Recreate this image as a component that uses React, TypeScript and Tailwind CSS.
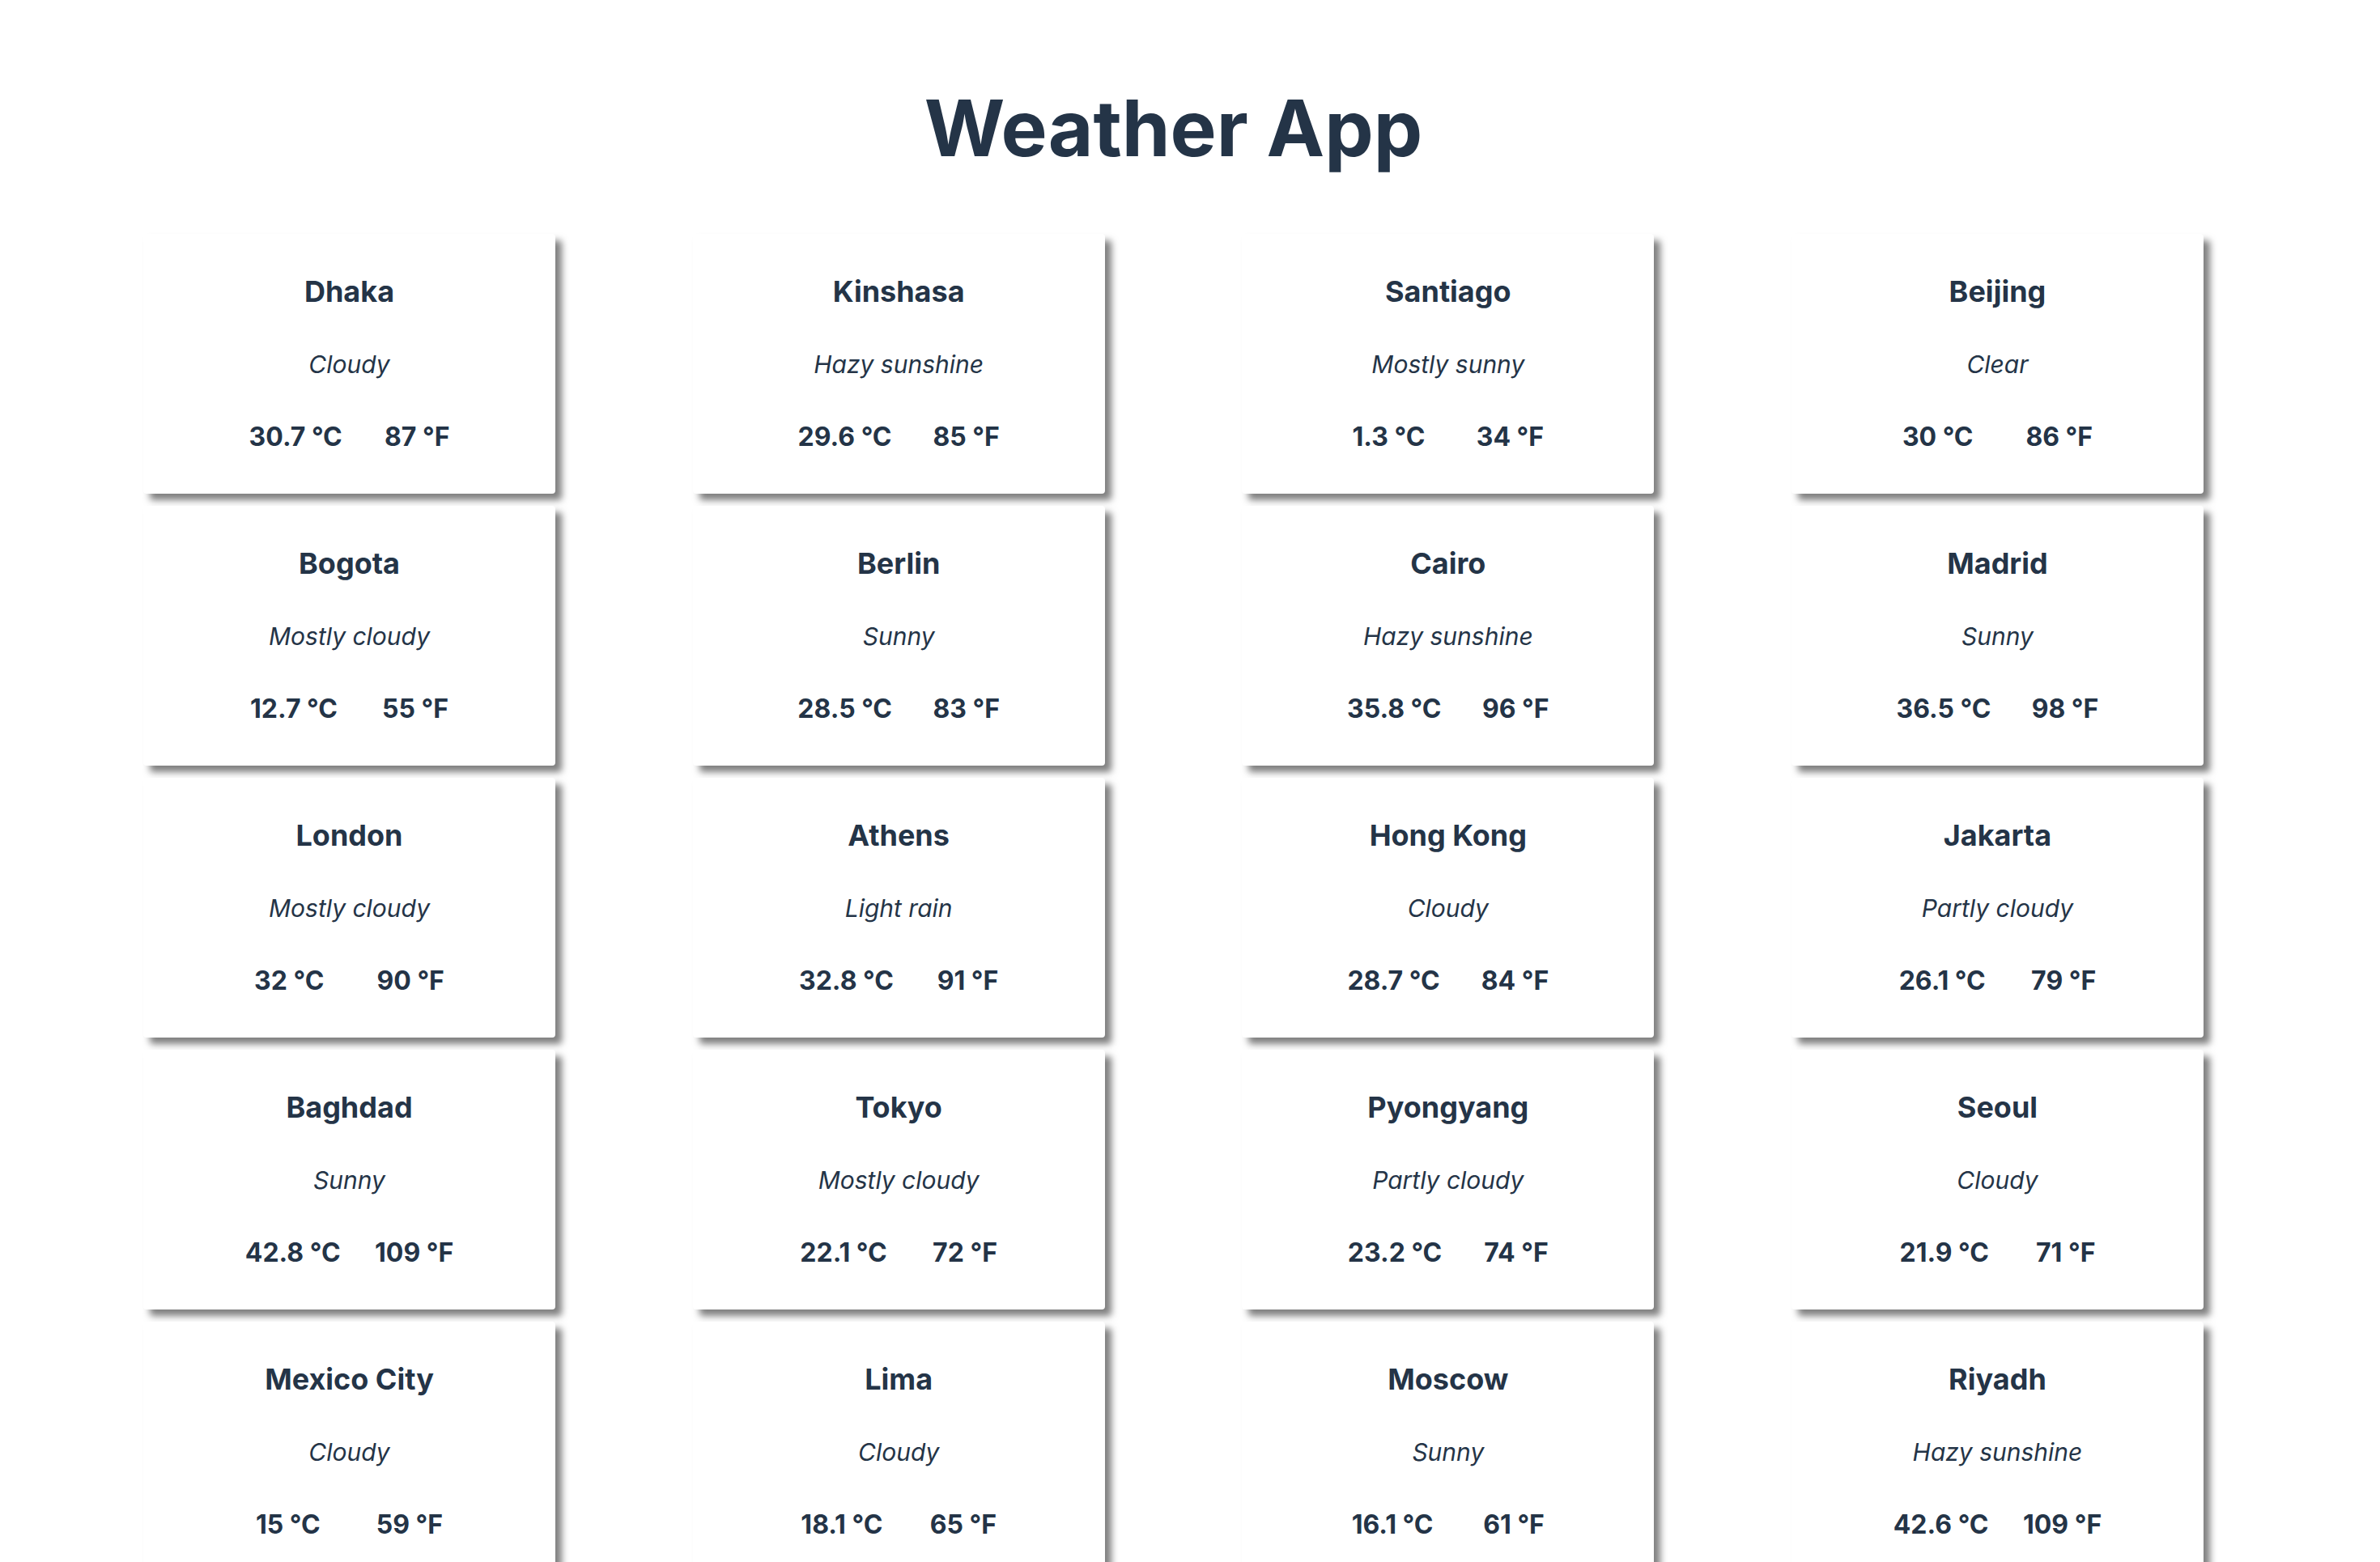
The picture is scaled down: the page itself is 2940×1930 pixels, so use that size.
const cities = [
  { name: 'Dhaka', text: 'Cloudy', c: '30.7', f: '87' },
  { name: 'Kinshasa', text: 'Hazy sunshine', c: '29.6', f: '85' },
  { name: 'Santiago', text: 'Mostly sunny', c: '1.3', f: '34' },
  { name: 'Beijing', text: 'Clear', c: '30', f: '86' },
  { name: 'Bogota', text: 'Mostly cloudy', c: '12.7', f: '55' },
  { name: 'Berlin', text: 'Sunny', c: '28.5', f: '83' },
  { name: 'Cairo', text: 'Hazy sunshine', c: '35.8', f: '96' },
  { name: 'Madrid', text: 'Sunny', c: '36.5', f: '98' },
  { name: 'London', text: 'Mostly cloudy', c: '32', f: '90' },
  { name: 'Athens', text: 'Light rain', c: '32.8', f: '91' },
  { name: 'Hong Kong', text: 'Cloudy', c: '28.7', f: '84' },
  { name: 'Jakarta', text: 'Partly cloudy', c: '26.1', f: '79' },
  { name: 'Baghdad', text: 'Sunny', c: '42.8', f: '109' },
  { name: 'Tokyo', text: 'Mostly cloudy', c: '22.1', f: '72' },
  { name: 'Pyongyang', text: 'Partly cloudy', c: '23.2', f: '74' },
  { name: 'Seoul', text: 'Cloudy', c: '21.9', f: '71' },
  { name: 'Mexico City', text: 'Cloudy', c: '15', f: '59' },
  { name: 'Lima', text: 'Cloudy', c: '18.1', f: '65' },
  { name: 'Moscow', text: 'Sunny', c: '16.1', f: '61' },
  { name: 'Riyadh', text: 'Hazy sunshine', c: '42.6', f: '109' },
];

function WeatherCard({ city }: { city: (typeof cities)[number] }) {
  return (
    <div className="h-[321px] bg-white rounded shadow-[8px_8px_8px_rgba(0,0,0,0.5)] flex flex-col items-center justify-center gap-[42px]">
      <h2 className="h-12 leading-[48px] text-[36px] font-bold">{city.name}</h2>
      <p className="h-12 leading-[48px] text-[30px] italic">{city.text}</p>
      <div className="h-12 leading-[48px] w-[300px] flex justify-around text-[32px] font-bold">
        <span>{city.c} °C</span>
        <span>{city.f} °F</span>
      </div>
    </div>
  );
}

export default function App() {
  return (
    <div className="min-h-screen bg-white text-[#243447] font-['Inter',sans-serif]">
      <div className="ml-[177px] w-[2545px] pb-16">
        <h1 className="mt-[110px] mb-[83px] text-center text-[96px] leading-none font-bold">Weather App</h1>
        <div className="grid grid-cols-[repeat(4,509px)] justify-between gap-y-[15px]">
          {cities.map(c => (
            <WeatherCard key={c.name} city={c} />
          ))}
        </div>
      </div>
    </div>
  );
}
